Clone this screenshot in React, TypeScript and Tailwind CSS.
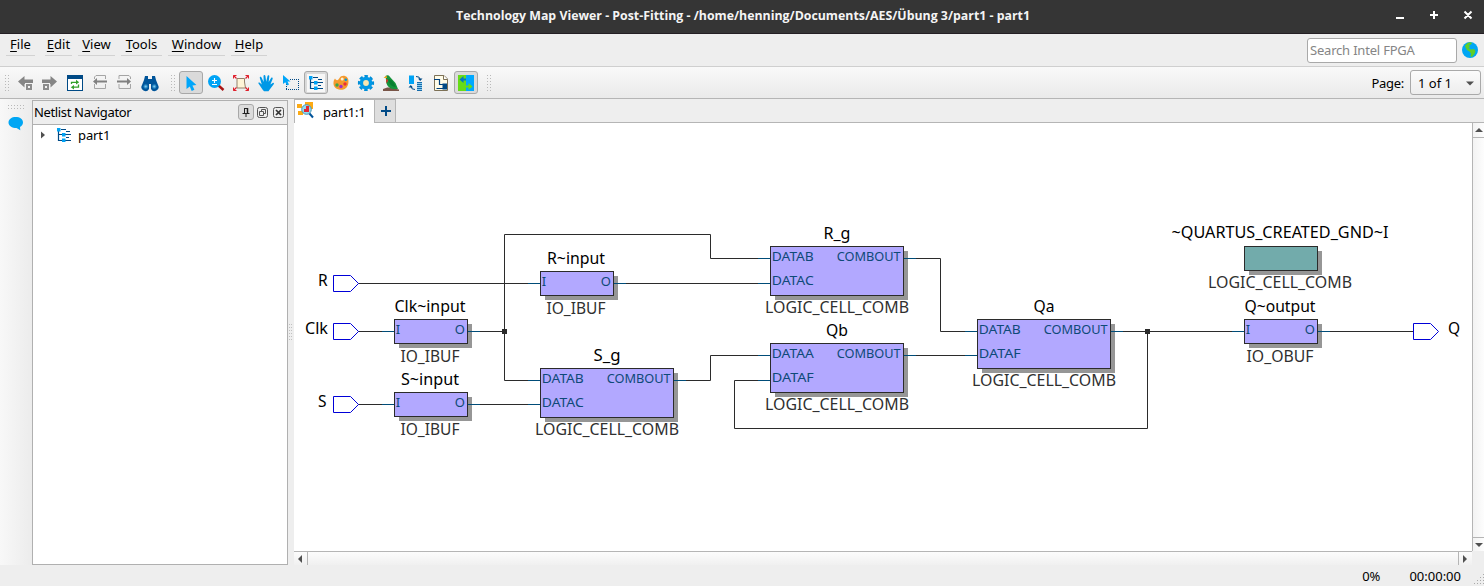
import React from "react";

type Kids = { children?: React.ReactNode };

function Icon({ children, size = 18 }: Kids & { size?: number }) {
  return (
    <svg width={size} height={size} viewBox="0 0 18 18" className="block shrink-0">
      {children}
    </svg>
  );
}

function Handle() {
  return (
    <svg width="5" height="16" viewBox="0 0 5 16" className="block shrink-0">
      {[0, 3, 6, 9, 12, 15].map((y) => (
        <g key={y} fill="#b9b9b9">
          <rect x="0" y={y} width="1" height="1" />
          <rect x="3" y={y} width="1" height="1" />
        </g>
      ))}
    </svg>
  );
}

function Cell({ children, on }: Kids & { on?: boolean }) {
  return (
    <div
      className={
        on
          ? "mr-px flex h-[23px] w-6 shrink-0 items-center justify-center rounded-[3px] border border-[#a8a8a8] bg-[#dadada]"
          : "mr-px flex h-[23px] w-6 shrink-0 items-center justify-center"
      }
    >
      {children}
    </div>
  );
}

const TreeIcon = ({ size = 18 }: { size?: number }) => (
  <Icon size={size}>
    <path d="M3.500 3V14.500H8M3.500 8.500H8M6 3.500H11M10 8.500H16M10 14.500H16M11 5.500H15M11 11.500H14" stroke="#004a86" strokeWidth="1.200" fill="none" />
    <rect x="2" y="2" width="3.500" height="3.500" fill="#00a3f5" />
    <rect x="7" y="7" width="3.500" height="3.500" fill="#00a3f5" />
    <rect x="7" y="12.500" width="3.500" height="3.500" fill="#00a3f5" />
  </Icon>
);

function ToolbarLeft() {
  return (
    <div className="flex">
      <Cell>
        <Icon>
          <path d="M2 7.500 8.500 2v3.500H17v4.500H8.500v3.500z" fill="#858585" />
          <rect x="9" y="9" width="8" height="7" fill="#f2f2f2" />
          <rect x="10" y="10" width="6" height="6" fill="#8c8c8c" />
          <rect x="12" y="12" width="2" height="2" fill="#f2f2f2" />
        </Icon>
      </Cell>
      <Cell>
        <Icon>
          <path d="M16 7.500 9.500 2v3.500H1v4.500h8.500v3.500z" fill="#858585" />
          <rect x="1" y="9" width="8" height="7" fill="#f2f2f2" />
          <rect x="2" y="10" width="6" height="6" fill="#8c8c8c" />
          <rect x="4" y="12" width="2" height="2" fill="#f2f2f2" />
        </Icon>
      </Cell>
      <Cell>
        <Icon>
          <rect x="1.500" y="1.500" width="15" height="15" fill="#fff" stroke="#004a86" />
          <rect x="1" y="1" width="16" height="4" fill="#004a86" />
          <path d="M5.500 10V8.300H11M12.500 10.500v2.700H7" stroke="#34a12c" strokeWidth="1.300" fill="none" />
          <path d="M10 5.800 13.200 8.300 10 10.500zM8 11 4.800 13.200 8 15.500z" fill="#34a12c" />
        </Icon>
      </Cell>
      <Cell>
        <Icon>
          <path d="M3.500 5V3L5 1.500H14.500V5M3.500 10V14.500H14.500V10" fill="none" stroke="#a5a5a5" />
          <path d="M2 7.500 6 4v2.500h10v2H6V11z" fill="#808080" />
        </Icon>
      </Cell>
      <Cell>
        <Icon>
          <path d="M3 5V1.500H13L14.500 3V5M3 10V14.500H14.500V10" fill="none" stroke="#a5a5a5" />
          <path d="M15 7.500 11 4v2.500H1v2h10V11z" fill="#808080" />
        </Icon>
      </Cell>
      <Cell>
        <Icon>
          <path d="M4 2h3v3h4V2h3l1 4 2 5a4 4 0 0 1-7 4V10H8v5a4 4 0 0 1-7-4L3 6z" fill="#00559a" />
          <circle cx="4.700" cy="12.500" r="2.200" fill="#2788c6" />
          <circle cx="13.300" cy="12.500" r="2.200" fill="#2788c6" />
          <circle cx="4.700" cy="12.500" r="1.100" fill="#80c5e5" />
          <circle cx="13.300" cy="12.500" r="1.100" fill="#80c5e5" />
        </Icon>
      </Cell>
    </div>
  );
}

function ToolbarTools() {
  return (
    <div className="flex">
      <Cell on>
        <Icon>
          <path d="M4.500 2v13l3.300-2.600L9.700 17l2.700-1.200-2-4.200 4-.6z" fill="#00a6fa" />
        </Icon>
      </Cell>
      <Cell>
        <Icon>
          <path d="m11.500 11.500 5 4.500" stroke="#a91414" strokeWidth="2.400" />
          <circle cx="7.500" cy="7.500" r="6.500" fill="#00a3f5" />
          <path d="M7.500 4v5M5 6.500h5M5 10.500h5" stroke="#fff" strokeWidth="1.100" />
        </Icon>
      </Cell>
      <Cell>
        <Icon>
          <path d="M5 4.500h7.500V8l1 6H5z" fill="#fff5d8" stroke="#93816c" />
          <path d="m1.500 1.500 3 3m12-3-3 3m-12 12 3-3m12 3-3-3" stroke="#e0202d" strokeWidth="1.200" />
          <path d="M1.500 4.500V1.500H4.500M13.500 1.500H16.500V4.500M1.500 13.500v3H4.500M13.500 16.500h3v-3" stroke="#e0202d" fill="none" />
        </Icon>
      </Cell>
      <Cell>
        <Icon>
          <path d="m5.500 15.500-4-6C1 8.500 2 8 2.800 8.800l2 1.700-2-6.500c-.3-1.300 1.300-1.700 1.700-.5L6.700 8 6.500 2c0-1.300 1.700-1.300 1.900 0l.8 5.700L10.500 2c.3-1.200 1.900-.9 1.800.3L11.700 8l2.400-4c.7-1 2-.2 1.500.9l-2.200 5.600L15.700 9c1-.5 1.800.5 1 1.300l-4 5.200-1.200 1.700H7z" fill="#0098e6" />
        </Icon>
      </Cell>
      <Cell>
        <Icon>
          <path d="M8 5.500H17M4 15.500H17" fill="none" stroke="#004a86" strokeDasharray="1 1" shapeRendering="crispEdges" />
          <path d="M4.500 10V16M16.500 5V16" fill="none" stroke="#004a86" strokeDasharray="1 1" shapeRendering="crispEdges" />
          <path d="M1 1v9l2.300-1.700L5 11.500l2-1-1.500-3H8.500z" fill="#00a6fa" />
        </Icon>
      </Cell>
      <Cell on>
        <div className="bg-[#f7f7f7]"><TreeIcon /></div>
      </Cell>
      <Cell>
        <Icon>
          <path d="M3 4.500c1.500 2.700 3.500 1.700 4.500-.5C8.500 2 11 1.500 13 2c3 1 4 4 3.300 7.500-.8 4.500-4 6.500-7.800 6.300C4 15.500 1 12.500 1.500 8.500 1.700 6.700 2 5.700 3 4.500z" fill="#f59a2d" />
          <circle cx="10.200" cy="5" r="1.500" fill="#fff0d0" />
          <circle cx="13.800" cy="5.800" r="1.300" fill="#0096d8" />
          <circle cx="13" cy="10" r="1.700" fill="#ed3030" />
          <circle cx="9" cy="12.500" r="1.700" fill="#a42bc5" />
          <circle cx="5" cy="11" r="1.700" fill="#3aa64d" />
        </Icon>
      </Cell>
      <Cell>
        <Icon>
          <circle cx="9" cy="9" r="7" fill="none" stroke="#008ed8" strokeWidth="2.200" strokeDasharray="3.500 1.998" strokeDashoffset="1.750" />
          <circle cx="9" cy="9" r="4.600" fill="#f8e6b0" stroke="#0098e6" strokeWidth="3.400" />
        </Icon>
      </Cell>
      <Cell>
        <Icon>
          <path d="M1 15c3-1 5-2 8-1l8 1.500V17H1z" fill="#795548" />
          <path d="M3.500 2C5 .8 7 1 8 3l5.500 6 2.500 6h-5C7 14.500 4 11 4 6z" fill="#15943b" />
          <path d="M6.500 5c4 1 6 4 7 8-4-.5-7-3-7-8z" fill="#087f31" />
          <path d="m1.500 4 3-2.500L5 4z" fill="#f2a31b" />
          <path d="M4 5c1 0 2 .5 2 2l-1.500 2.500z" fill="#df3028" />
        </Icon>
      </Cell>
      <Cell>
        <Icon>
          <rect x="2" y="1.500" width="5" height="8.500" fill="#00a3f5" />
          <rect x="10" y="8" width="5" height="8.500" fill="#8bcbed" />
          <path d="M10 8.500H15M10 10.500H15M10 12.500H15M10 14.500H15M10 16.500H15" stroke="#176cab" />
          <path d="M9 2.500q4 0 4 2.500M8 15.500q-4 0-4-3" stroke="#004a86" fill="none" />
          <path d="M11 4.500h4.500L13.200 7zM1.500 13.500H6L3.800 11z" fill="#004a86" />
        </Icon>
      </Cell>
      <Cell>
        <Icon>
          <path d="M2.500 1.500H12L15.500 5v11.500h-13z" fill="#fffce9" stroke="#7d7156" />
          <path d="M2 5.500h5.500v5H11M4.500 14.500h7" stroke="#003f7d" strokeWidth="1.200" fill="none" />
          <path d="M10.500 9.500h4.500v6h-4.500z" fill="#004a86" />
          <path d="M11.500 1.500V5.500h4" stroke="#7d7156" fill="#fff" />
        </Icon>
      </Cell>
      <Cell on>
        <Icon>
          <rect x="1" y="1" width="16" height="16" fill="#00a8ff" />
          <path d="M1 1h8v16H1z" fill="#66dc18" />
          <path d="m2.500 5.500 4-3.500v2.500H9v2H6.500V9z" fill="#0078c4" />
          <path d="m15.500 12.500-4-3.500v2.500H9v2h2.500V16z" fill="#66dc18" />
        </Icon>
      </Cell>
    </div>
  );
}

type Block = {
  x: number; y: number; w: number; h: number;
  name: string; nw: number; kind: string; kw: number;
  left: [string, number][]; out?: [string, number]; teal?: boolean;
};

const small = (x: number, y: number, name: string, nw: number, kind: string, kw: number): Block => ({
  x, y, w: 74, h: 25, name, nw, kind, kw, left: [["I", 4]], out: ["O", 10],
});
const logic = (x: number, y: number, name: string, nw: number, a: string, b: string): Block => ({
  x, y, w: 134, h: 50, name, nw, kind: "LOGIC_CELL_COMB", kw: 144, left: [[a, 42], [b, 42]], out: ["COMBOUT", 64],
});

const blocks: Block[] = [
  small(394, 319, "Clk~input", 71, "IO_IBUF", 59),
  small(540, 271, "R~input", 58, "IO_IBUF", 59),
  small(394, 392, "S~input", 58, "IO_IBUF", 59),
  small(1244, 319, "Q~output", 71, "IO_OBUF", 67),
  logic(540, 368, "S_g", 27, "DATAB", "DATAC"),
  logic(770, 246, "R_g", 27, "DATAB", "DATAC"),
  logic(770, 343, "Qb", 22, "DATAA", "DATAF"),
  logic(977, 319, "Qa", 21, "DATAB", "DATAF"),
  { x: 1244, y: 246, w: 74, h: 25, name: "~QUARTUS_CREATED_GND~I", nw: 217, kind: "LOGIC_CELL_COMB", kw: 144, left: [], teal: true },
];

const wires = [
  "M358 283.500H540", "M614 283.500H770", "M358 331.500H394", "M468 331.500H504.500",
  "M540 380.500H504.500V234.500H710.500V258.500H770", "M358 404.500H394", "M468 404.500H540",
  "M674 380.500H710.500V355.500H770", "M904 258.500H940.500V331.500H977", "M904 355.500H977",
  "M1111 331.500H1244", "M1147.500 331.500V428.500H734.500V380.500H770", "M1318 331.500H1413",
];

const stubs = [
  [528, 283], [614, 283], [758, 283], [382, 331], [468, 331], [528, 380], [758, 258],
  [382, 404], [468, 404], [528, 404], [674, 380], [758, 355], [758, 380], [904, 258],
  [904, 355], [965, 331], [965, 355], [1111, 331], [1232, 331], [1318, 331],
];

const pins: [number, number, string, number, number][] = [
  [333, 283, "R", 318, 10], [333, 331, "Clk", 305, 23], [333, 404, "S", 318, 9], [1413, 331, "Q", 1448, 12],
];

function Label({ x, y, w, fill, port, children }: { x: number; y: number; w: number; fill: string; port?: boolean; children: string }) {
  return (
    <text
      x={x}
      y={y}
      textLength={children.length > 1 ? w : undefined}
      lengthAdjust="spacingAndGlyphs"
      className={port ? "text-[13px]" : "text-[15.500px]"}
      fill={fill}
    >
      {children}
    </text>
  );
}

function Schematic() {
  return (
    <svg width="1178" height="428" viewBox="294 123 1178 428" className="block font-['Noto_Sans',sans-serif]">
      {blocks.map((b, i) => (
        <g key={i}>
          <rect x={b.x + 5} y={b.y + 5} width={b.w - 1} height={b.h - 1} fill="#969696" />
          <rect x={b.x + 0.5} y={b.y + 0.5} width={b.w - 1} height={b.h - 1} fill={b.teal ? "#72abab" : "#b2a8ff"} stroke="#2b2b2b" />
        </g>
      ))}
      <path d={wires.join("")} fill="none" stroke="#2b2b2b" />
      {stubs.map(([x, y], i) => (
        <rect key={i} x={x} y={y} width="12" height="1" fill="#004c78" />
      ))}
      <rect x="502" y="329" width="5" height="5" fill="#2b2b2b" />
      <rect x="1145" y="329" width="5" height="5" fill="#2b2b2b" />
      {blocks.map((b, i) => {
        const mid = b.x + b.w / 2 - (b.h === 25 ? 1 : 0);
        return (
          <g key={i}>
            <Label x={mid - b.nw / 2} y={b.y - (b.teal ? 8 : 7)} w={b.nw} fill="#000">{b.name}</Label>
            <Label x={mid - b.kw / 2} y={b.y + b.h + (b.h === 25 && !b.teal ? 17.5 : 17)} w={b.kw} fill="#303030">{b.kind}</Label>
            {b.left.map(([t, w], k) => (
              <Label key={k} port x={b.x + 1.8} y={b.y + 15 + k * 24} w={w} fill="#0e4a78">{t}</Label>
            ))}
            {b.out && (
              <Label port x={b.x + b.w - 3.3 - b.out[1]} y={b.y + 15} w={b.out[1]} fill="#0e4a78">{b.out[0]}</Label>
            )}
          </g>
        );
      })}
      {pins.map(([x, y, t, tx, w]) => (
        <g key={t}>
          <path d={`M${x + 0.5} ${y - 7.5}h17l8 8l-8 8h-17z`} fill="#fff" stroke="#0000d8" />
          <Label x={tx} y={y + 3} w={w} fill="#000">{t}</Label>
        </g>
      ))}
    </svg>
  );
}

function Tri({ d }: { d: string }) {
  return (
    <svg width="8" height="8" viewBox="0 0 8 8" className="block shrink-0">
      <path d={d} fill="#505050" />
    </svg>
  );
}

const menus: [string, string][] = [
  ["File", "w-[29px] mr-[10px]"], ["Edit", "w-[27px] mr-[6px]"], ["View", "w-[37px] mr-[6px]"],
  ["Tools", "w-[41px] mr-[6px]"], ["Window", "w-[57px] mr-[6px]"], ["Help", "w-[36px]"],
];

export default function App() {
  return (
    <div className="flex h-[586px] w-[1484px] flex-col overflow-hidden bg-[#eee] font-['Noto_Sans',sans-serif] text-[13px] leading-4 text-black">
      <header className="flex h-[34px] shrink-0 items-center border-b border-[#241f24] bg-[#353535] text-white">
        <div className="w-[356px]" />
        <svg width="800" height="34" className="block font-['Open_Sans',sans-serif] text-[13px] font-bold">
          <text x="100" y="20" textLength="574" lengthAdjust="spacingAndGlyphs" fill="#f4f4f4">
            Technology Map Viewer - Post-Fitting - /home/henning/Documents/AES/Übung 3/part1 - part1
          </text>
        </svg>
        <svg width="90" height="34" className="ml-auto block" fill="none" stroke="#fff" strokeWidth="2">
          <path d="M2 18h8M36 15h8M40 11v8M70.500 11.500l7 7M77.500 11.500l-7 7" />
        </svg>
      </header>

      <nav className="flex h-8 shrink-0 items-start pl-[6px]">
        {menus.map(([m, c]) => (
          <div key={m} className={`${c} flex h-[22px] shrink-0 justify-center border-b border-[#d2d2d2] pt-[2px]`}>
            <span><span className="underline decoration-1 underline-offset-2">{m[0]}</span>{m.slice(1)}</span>
          </div>
        ))}
        <div className="mt-1 mr-[5px] ml-auto flex h-[25px] w-[150px] items-center rounded-[3px] border border-[#a9a9a9] bg-white pb-[2px] pl-[2px] text-[#858585]">
          <span className="tracking-[-0.2px]">Search Intel FPGA</span>
        </div>
        <div className="mt-2 mr-[6px]">
          <svg width="16" height="16" viewBox="0 0 16 16" className="block">
            <circle cx="8" cy="8" r="8" fill="#00a6f4" />
            <path d="M3 3.500 5.500 1l2-.7 2.500.5L9 2.500l-2 .7L8 5 6.500 6 9 7.500l3-.5 1.500 2-1 3L10 15l-1.500-.5L9 11.500 7.500 9.500 5 8 3.500 5.500z" fill="#5fce27" />
          </svg>
        </div>
      </nav>

      <div className="flex h-[33px] shrink-0 items-center border-y border-t-[#cfcfcf] border-b-[#b5b5b5] bg-linear-to-b from-[#f9f9f9] to-[#eaeaea] pl-[5px]">
        <div className="w-2"><Handle /></div>
        <ToolbarLeft />
        <div className="flex w-4 pl-2"><Handle /></div>
        <ToolbarTools />
        <div className="ml-2"><Handle /></div>
        <span className="mr-[6px] ml-auto tracking-[-0.3px]">Page:</span>
        <div className="mr-[3px] flex h-[25px] w-[71px] items-center justify-between rounded-[3px] border border-[#a9a9a9] bg-linear-to-b from-[#fbfbfb] to-[#ededed] pr-[6px] pl-[7px]">
          1 of 1
          <Tri d="M0 2.500h8L4 6.500z" />
        </div>
      </div>

      <div className="flex h-[466px] shrink-0">
        <aside className="flex w-8 shrink-0 flex-col items-center bg-linear-to-r from-[#f8f8f8] to-[#ececec] pt-[6px]">
          <svg width="17" height="4" className="ml-px block">
            {[0, 3, 6, 9, 12, 15].map((x) => (
              <g key={x} fill="#b9b9b9"><rect x={x} width="1" height="1" /><rect x={x} y="3" width="1" height="1" /></g>
            ))}
          </svg>
          <svg width="16" height="14" viewBox="0 0 16 14" className="mt-2 block">
            <path d="M7.500 0C12 0 15 2 15 5.500c0 2-1.500 3.600-3 4.500l.3 3.300L8.500 11C4 11 .5 9 .5 5.500.5 2 4 0 7.500 0z" fill="#00a6f4" />
          </svg>
        </aside>

        <section className="mt-px flex w-64 shrink-0 flex-col border border-[#b0b0b0] bg-white">
          <div className="flex h-6 shrink-0 items-center border-b border-[#b0b0b0] bg-[#eee] pr-[2px] pl-px">
            <span className="-mt-[2px] tracking-[-0.35px]">Netlist Navigator</span>
            <div className="ml-auto flex h-4 w-4 -translate-y-px items-center justify-center rounded-[3px] border border-[#a8a8a8] bg-[#dcdcdc]">
              <svg width="10" height="12" viewBox="0 0 10 12" className="block shrink-0" fill="none" stroke="#202020">
                <path d="M3.500 2v5M3 2.500h4M1.500 7.500h7M5 8v3" /><path d="M6.500 2v5" strokeWidth="1.500" />
              </svg>
            </div>
            <svg width="12" height="12" viewBox="0 0 12 12" className="ml-[3px] block" fill="none" stroke="#555">
              <rect x=".5" y=".5" width="10" height="10" rx="2" /><path d="M4.500 4V2.500h4v4H7M2.500 4.500h4v4h-4z" />
            </svg>
            <svg width="12" height="12" viewBox="0 0 12 12" className="ml-1 block" fill="none" stroke="#555">
              <rect x=".5" y=".5" width="10" height="10" rx="2" /><path d="m3 3 5 5M8 3 3 8" stroke="#333" strokeWidth="1.700" />
            </svg>
          </div>
          <div className="flex h-[21px] items-center pb-px pl-[6px]">
            <Tri d="M2 0.500v7L6 4z" />
            <div className="mr-[5px] ml-2"><TreeIcon /></div>
            <span className="-mt-px tracking-[-0.1px]">part1</span>
          </div>
        </section>

        <div className="flex w-[6px] shrink-0 items-center justify-center">
          <svg width="4" height="16" className="block">
            {[0, 3, 6, 9, 12, 15].map((y) => (
              <g key={y} fill="#c0c0c0"><rect y={y} width="1" height="1" /><rect x="2" y={y} width="1" height="1" /></g>
            ))}
          </svg>
        </div>

        <main className="flex min-w-0 flex-1 flex-col">
          <div className="flex h-6 shrink-0 items-end border-b border-[#b5b5b5]">
            <div className="-mb-px flex h-6 w-[81px] shrink-0 items-center border border-b-0 border-[#b5b5b5] bg-white">
              <svg width="19" height="18" viewBox="0 0 19 18" className="mb-1 ml-[2px] block">
                <path d="M0 3h5v4H0zM8 1h8v7H8zM1 10h5v4H1z" fill="#fcaa14" />
                <path d="m12 12 4 4.500" stroke="#00539a" strokeWidth="2" />
                <circle cx="9.500" cy="8.500" r="4.800" fill="#8edcf1" stroke="#4d91b3" />
                <path d="M9 5h3v6H7V8h2z" fill="#e22635" />
              </svg>
              <span className="ml-[7px] tracking-[-0.15px]">part1:1</span>
            </div>
            <div className="flex h-[23px] w-[21px] items-center justify-center border-t border-r border-[#b5b5b5] bg-[#dedede]">
              <svg width="10" height="10" className="ml-px block"><path d="M5 0v10M0 5h10" stroke="#004a86" strokeWidth="2" /></svg>
            </div>
          </div>
          <div className="flex h-[428px] shrink-0">
            <div className="w-[1178px] shrink-0 bg-white"><Schematic /></div>
            <div className="flex flex-1 flex-col justify-between border-l border-[#b5b5b5] bg-linear-to-r from-[#f3f3f3] to-[#fdfdfd]">
              <div className="flex h-[15px] items-center justify-center border-b border-[#b5b5b5]"><Tri d="M0 6h8L4 2z" /></div>
              <div className="flex h-[14px] items-center justify-center border-t border-[#b5b5b5]"><Tri d="M0 2h8L4 6z" /></div>
            </div>
          </div>
          <div className="flex h-[14px] w-[1178px] shrink-0 justify-between border-t border-[#b5b5b5] bg-linear-to-b from-[#fcfcfc] to-[#f0f0f0]">
            <div className="flex w-[14px] items-center justify-center border-r border-[#b5b5b5] pr-px"><Tri d="M6 0v8L2 4z" /></div>
            <div className="flex w-[14px] items-center justify-center border-l border-[#b5b5b5] pr-px"><Tri d="M2 0v8L6 4z" /></div>
          </div>
        </main>
      </div>

      <footer className="flex h-[21px] shrink-0 items-center justify-end">
        <span className="mr-[29px] pt-px">0%</span>
        <span className="mr-[13px] pt-px">00:00:00</span>
        <svg width="10" height="12" className="mt-auto block">
          {[[9, 0], [6, 3], [9, 3], [3, 6], [6, 6], [9, 6], [0, 9], [3, 9], [6, 9], [9, 9]].map(([x, y], i) => (
            <rect key={i} x={x} y={y} width="1" height="1" fill="#aaa" />
          ))}
        </svg>
      </footer>
    </div>
  );
}
